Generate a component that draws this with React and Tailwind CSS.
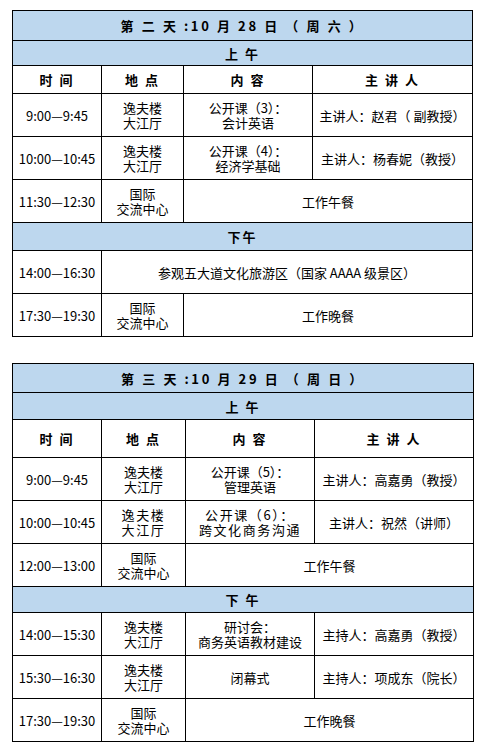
import React from "react";

// cells
const td = "border border-black text-center align-middle p-0 leading-[15px] whitespace-nowrap";
const blue = "bg-[#bdd7ee] font-bold";

function Lines({ a, b, wide }) {
  return (
    <div className={wide ? "tracking-[1.6px]" : ""}>
      <div>{a}</div>
      {b && <div>{b}</div>}
    </div>
  );
}

function Schedule({ title, am, pm, cols, rows, headH, amH, colH, pmH }) {
  const total = cols.reduce((s, w) => s + w, 0);
  return (
    <table className="table-fixed border-collapse" style={{ width: total }}>
      <colgroup>
        {cols.map((w, i) => (
          <col key={i} style={{ width: w }} />
        ))}
      </colgroup>
      <tbody>
        <tr style={{ height: headH }}>
          <td colSpan={4} className={`${td} ${blue} tracking-[2.6px]`}>
            {title}
          </td>
        </tr>
        <tr style={{ height: amH }}>
          <td colSpan={4} className={`${td} ${blue} tracking-[2px]`}>
            {am}
          </td>
        </tr>
        <tr style={{ height: colH }}>
          <td className={`${td} font-bold tracking-[2px]`}>时 间</td>
          <td className={`${td} font-bold tracking-[2px]`}>地 点</td>
          <td className={`${td} font-bold tracking-[2px]`}>内 容</td>
          <td className={`${td} font-bold tracking-[2px]`}>主 讲 人</td>
        </tr>
        {rows.map((r, i) =>
          r.pm ? (
            <tr key={i} style={{ height: pmH }}>
              <td colSpan={4} className={`${td} ${blue} tracking-[2px]`}>
                {r.pm}
              </td>
            </tr>
          ) : (
            <tr key={i} className="h-[43px]">
              <td className={td}>{r.time}</td>
              {r.all ? (
                <td colSpan={3} className={td}>
                  {r.all}
                </td>
              ) : (
                <>
                  <td className={td}>
                    <Lines a={r.place[0]} b={r.place[1]} wide={r.wide} />
                  </td>
                  {r.meal ? (
                    <td colSpan={2} className={td}>
                      {r.meal}
                    </td>
                  ) : (
                    <>
                      <td className={td}>
                        <Lines a={r.topic[0]} b={r.topic[1]} wide={r.wide} />
                      </td>
                      <td className={td}>{r.who}</td>
                    </>
                  )}
                </>
              )}
            </tr>
          )
        )}
      </tbody>
    </table>
  );
}

const hall = ["逸夫楼", "大江厅"];
const center = ["国际", "交流中心"];

const day2 = [
  { time: "9:00—9:45", place: hall, topic: ["公开课（3）：", "会计英语"], who: "主讲人：赵君（ 副教授）" },
  { time: "10:00—10:45", place: hall, topic: ["公开课（4）：", "经济学基础"], who: "主讲人：杨春妮（教授）" },
  { time: "11:30—12:30", place: center, meal: "工作午餐" },
  { pm: "下午" },
  { time: "14:00—16:30", all: "参观五大道文化旅游区（国家 AAAA 级景区）" },
  { time: "17:30—19:30", place: center, meal: "工作晚餐" },
];

const day3 = [
  { time: "9:00—9:45", place: hall, topic: ["公开课（5）：", "管理英语"], who: "主讲人：高嘉勇（教授）" },
  { time: "10:00—10:45", place: hall, topic: ["公开课（6）：", "跨文化商务沟通"], who: "主讲人：祝然（讲师）", wide: true },
  { time: "12:00—13:00", place: center, meal: "工作午餐" },
  { pm: "下 午" },
  { time: "14:00—15:30", place: hall, topic: ["研讨会：", "商务英语教材建设"], who: "主持人：高嘉勇（教授）" },
  { time: "15:30—16:30", place: hall, topic: ["闭幕式"], who: "主持人：项成东（院长）" },
  { time: "17:30—19:30", place: center, meal: "工作晚餐" },
];

export default function App() {
  return (
    <div
      className="w-[484px] h-[752px] bg-white text-black text-[13px] pt-[10px] pl-[12px] flex flex-col items-start gap-[26px]"
      style={{ fontFamily: '"Noto Sans CJK SC", "Noto Sans", sans-serif' }}
    >
      <Schedule
        title="第 二 天 :10 月 28 日 （ 周 六 ）"
        am="上 午"
        cols={[89, 82, 129, 160]}
        rows={day2}
        headH={30}
        amH={25}
        colH={28}
        pmH={28}
      />
      <Schedule
        title="第 三 天 :10 月 29 日 （ 周 日 ）"
        am="上 午"
        cols={[89, 84, 129, 159]}
        rows={day3}
        headH={29}
        amH={27}
        colH={38}
        pmH={26}
      />
    </div>
  );
}
